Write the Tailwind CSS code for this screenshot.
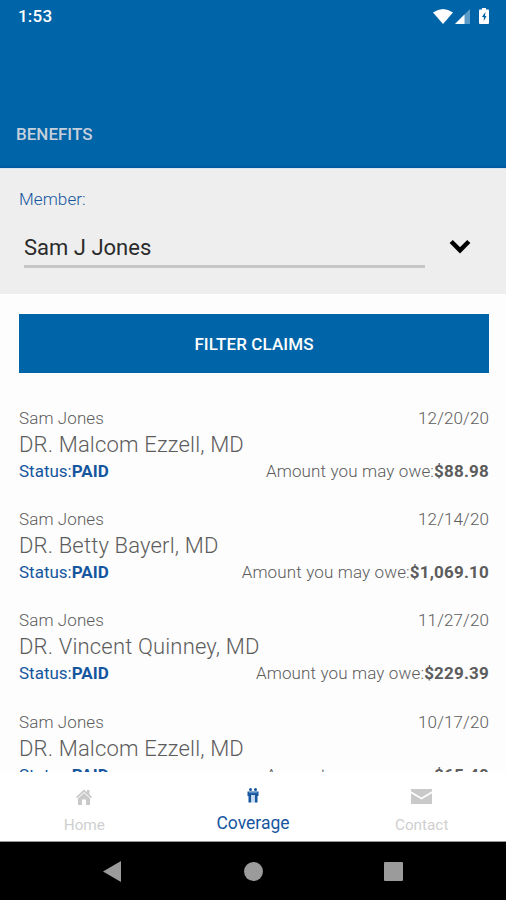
<!DOCTYPE html>
<html lang="en">
<head>
  <meta charset="UTF-8" />
  <meta name="viewport" content="width=device-width, initial-scale=1.0"/>
  <title>Benefits</title>
  <script src="https://cdn.jsdelivr.net/npm/@tailwindcss/browser@4"></script>
</head>
<body class="bg-[#fdfdfd] font-['Roboto',sans-serif]">
  <div class="w-[506px] h-[900px] flex flex-col overflow-hidden">

    <!-- Header -->
    <header class="h-[168px] shrink-0 bg-[#0065a8] border-b-2 border-[#005a9f] flex flex-col justify-between">
      <div class="h-8 flex items-center justify-between pl-[18px] pr-[17px]">
        <span class="pt-px text-[17px] font-medium text-white tracking-[0.2px]">1:53</span>
        <div class="flex items-center">
          <svg class="w-5 h-[15px]" viewBox="0 0 20 15" fill="#fff"><path d="M0 3.5Q10-3.500 20 3.500L10 15z"/></svg>
          <svg class="w-[15px] h-[15px] ml-[2px]" viewBox="0 0 15 15"><path d="M0 15L15 0v15z" fill="#fff" fill-opacity=".35"/><path d="M0 15L9.500 5.500V15z" fill="#fff"/></svg>
          <svg class="w-[10px] h-4 ml-[9px]" viewBox="0 0 10 16"><path d="M3 0h4v1.500h2q1 0 1 1V15q0 1-1 1H1q-1 0-1-1V2.500q0-1 1-1h2z" fill="#fff"/><path d="M6.500 4L2.800 9h2V13L7.500 8H6z" fill="#0065a8"/></svg>
        </div>
      </div>
      <h1 class="pl-4 pb-5 text-[17px] leading-6 font-medium text-[#c6d0dc]">BENEFITS</h1>
    </header>

    <!-- Member select -->
    <section class="h-[126px] shrink-0 bg-[#eee] border-t border-[#dde4ea] px-[19px] pt-[18px]">
      <label class="block text-[17px] leading-6 font-light tracking-[0.1px] text-[#15569f]">Member:</label>
      <div class="flex mt-[14px] pl-[5px]">
        <div class="w-[401px] h-[43px] border-b-3 border-[#c6c6c6] pt-2 text-[22px] leading-[29px] text-[#2b2b2b]">Sam J Jones</div>
        <svg class="w-[22px] h-[15px] ml-6 mt-[14px]" viewBox="0 0 22 15" fill="none" stroke="#000" stroke-width="4.500"><path d="M2.200 2.500L11 11.300L19.800 2.500"/></svg>
      </div>
    </section>

    <!-- Claims -->
    <main class="flex-1 min-h-0 overflow-hidden pl-[19px] pr-[17px] pt-5">
      <button class="block w-full h-[59px] pt-[2px] bg-[#0065a8] text-[17px] font-medium tracking-[0.1px] text-white">FILTER CLAIMS</button>
      <div id="claims" class="pt-[33px]"></div>
    </main>

    <!-- Tabs -->
    <nav class="h-[70px] shrink-0 bg-white border-b border-[#999] grid grid-cols-3 text-center text-[15.3px] leading-5 text-[#cfcfcf]">
      <div class="flex flex-col items-center pt-[17px]">
        <svg class="w-4 h-4" viewBox="0 0 16 16" fill="#c9c9c9"><path d="M0 8L8 0.500l3 2.800V1h2.500v4.500L16 8l-1.200 1.200L8 3 1.200 9.200z"/><path d="M2 9.500L8 4l6 5.500V16H10V10.500H6V16H2z"/></svg>
        <span class="mt-[10px]">Home</span>
      </div>
      <div class="flex flex-col items-center pt-4 text-[#15569f]">
        <svg class="w-3 h-4" viewBox="0 0 12 16" fill="#15569f"><circle cx="3.500" cy="1.500" r="1.500"/><circle cx="8.500" cy="1.500" r="1.500"/><path d="M.5 3.500h11V8h-1v6.500h-2.800V7H4.300v7.500H1.500V8h-1z"/><path d="M4.300 7h3.400v7.500H4.300z" fill="#c5d9f0"/><path d="M2 4.700h8" stroke="#8fb4dc" stroke-width=".7"/></svg>
        <span class="mt-[9px] text-[17.5px]">Coverage</span>
      </div>
      <div class="flex flex-col items-center pt-[17px]">
        <svg class="w-[21px] h-[15px]" viewBox="0 0 21 15" fill="#c9c9c9"><path d="M0 0h21v2.200L10.500 8.500 0 2.200z"/><path d="M0 4.200l10.500 6.300L21 4.200V15H0z"/></svg>
        <span class="mt-[11px]">Contact</span>
      </div>
    </nav>

    <!-- System buttons -->
    <footer class="h-[58px] shrink-0 bg-black flex items-center">
      <svg class="w-[18px] h-[21px] ml-[103px]" viewBox="0 0 18 21" fill="#9b9b9b"><path d="M0 10.500L18 0v21z"/></svg>
      <div class="size-[19px] rounded-full bg-[#9b9b9b] ml-[123px]"></div>
      <div class="size-[19px] rounded-[1px] bg-[#9b9b9b] ml-[121px]"></div>
    </footer>
  </div>

  <script>
    const claims = [
      { doctor: 'DR. Malcom Ezzell, MD', date: '12/20/20', owe: '$88.98' },
      { doctor: 'DR. Betty Bayerl, MD', date: '12/14/20', owe: '$1,069.10' },
      { doctor: 'DR. Vincent Quinney, MD', date: '11/27/20', owe: '$229.39' },
      { doctor: 'DR. Malcom Ezzell, MD', date: '10/17/20', owe: '$65.40' },
    ];

    document.getElementById('claims').innerHTML = claims.map(c => `
      <div class="h-[101.2px] text-[17px] leading-6 font-light text-[#5c5c5c]">
        <div class="flex justify-between"><span class="tracking-[0.1px]">Sam Jones</span><span class="tracking-[0.1px]">${c.date}</span></div>
        <div class="text-[22px] leading-[29px] tracking-[0.17px]">${c.doctor}</div>
        <div class="flex justify-between">
          <span class="text-[#15569f] font-normal">Status:<b class="font-bold">PAID</b></span>
          <span class="tracking-[0.14px]">Amount you may owe:<b class="font-bold tracking-[0.2px]">${c.owe}</b></span>
        </div>
      </div>`).join('');
  </script>
</body>
</html>
